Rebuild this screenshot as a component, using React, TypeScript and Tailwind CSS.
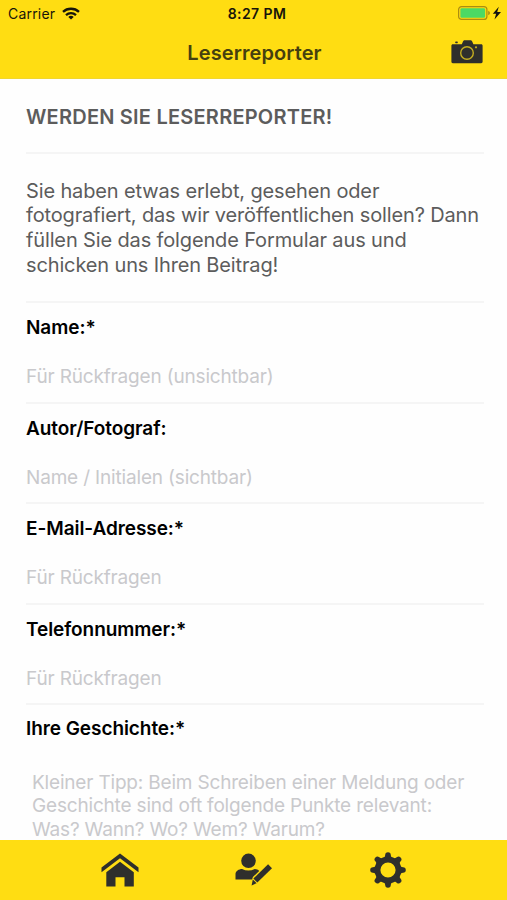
const fields = [
  { label: 'Name:*', hint: 'Für Rückfragen (unsichtbar)' },
  { label: 'Autor/Fotograf:', hint: 'Name / Initialen (sichtbar)' },
  { label: 'E-Mail-Adresse:*', hint: 'Für Rückfragen' },
  { label: 'Telefonnummer:*', hint: 'Für Rückfragen' },
];

function WifiIcon() {
  return (
    <svg width="18" height="13" viewBox="0 0 18 13" fill="none" stroke="#17150a" strokeWidth="2.3">
      <path d="M1 4.9C5.4.7 12.6.7 17 4.9" />
      <path d="M4 8.1c2.8-2.6 7.2-2.6 10 0" />
      <path d="M9 12.6 6.3 9.9c1.5-1.4 3.9-1.4 5.4 0z" fill="#17150a" stroke="none" />
    </svg>
  );
}

function BatteryIcon() {
  return (
    <svg width="45" height="15" viewBox="0 0 45 15">
      <rect x="0.6" y="0.6" width="28.3" height="12.8" rx="3" fill="none" stroke="#ac8d10" strokeWidth="1.2" />
      <rect x="2.4" y="2.3" width="24.7" height="9.4" rx="1.3" fill="#4cd964" />
      <path d="M30.4 4.8c1.8.7 1.8 3.7 0 4.4z" fill="#8c7618" />
      <path d="M40.8 .8 34.8 7.7h3.3l-1.6 5.8 6.5-7.4h-3.8z" fill="#111" />
    </svg>
  );
}

function CameraIcon() {
  return (
    <svg width="32" height="24" viewBox="0 0 32 24">
      <path
        d="M1.8 4.3h9L12 1.6C12.4.7 13 .3 13.8.3h5.6c.8 0 1.4.4 1.8 1.3l1.2 2.7h7.8c.8 0 1.4.6 1.4 1.4v16.1c0 .8-.6 1.4-1.4 1.4H1.8c-.8 0-1.4-.6-1.4-1.4V5.7c0-.8.6-1.4 1.4-1.4z"
        fill="#2f2f2c"
      />
      <rect x="4.2" y="1.6" width="2.6" height="1.6" rx="0.6" fill="#2f2f2c" />
      <circle cx="16" cy="13" r="6.3" fill="none" stroke="#c4ad20" strokeWidth="1.4" />
      <circle cx="25" cy="7.3" r="1.1" fill="#c4ad20" />
    </svg>
  );
}

function HomeIcon() {
  return (
    <svg width="38" height="34" viewBox="0 0 38 34" fill="#2f2f2c">
      <path d="M19 .5 37.5 14.6v4.6L19 5.3.5 19.2v-4.6z" />
      <path d="M19 8.7 32.8 19.2v14.3H23.5v-9.3h-9v9.3H5.3V19.2z" />
    </svg>
  );
}

function UserEditIcon() {
  return (
    <svg width="38" height="34" viewBox="0 0 38 34" fill="#2f2f2c">
      <circle cx="13.5" cy="7.8" r="7.3" />
      <path d="M.5 26.5v-5.2c0-3 3.3-5.2 6.6-5.2 4 2 8.5 2 12.7 0 1.7.2 3.3.7 4.4 1.8l-6.3 6.2-.8 2.4z" />
      <path d="m33.1 11.3 3.9 3.9-14.7 14.3-3.9-3.9z" />
      <path d="m17.8 26.4 3.8 3.8-5 2.2z" />
    </svg>
  );
}

const teeth = [0, 45, 90, 135, 180, 225, 270, 315];

function GearIcon() {
  return (
    <svg width="36" height="36" viewBox="-18 -18 36 36" fill="#2f2f2c">
      <circle r="10.5" fill="none" stroke="#2f2f2c" strokeWidth="5.8" />
      {teeth.map((angle) => (
        <path
          key={angle}
          transform={`rotate(${angle})`}
          d="M-5.5-11.5c1.9-.7 2.5-1.8 2.7-3.6.1-1.7.9-2.7 2.8-2.7s2.7 1 2.8 2.7c.2 1.8.8 2.9 2.7 3.6z"
        />
      ))}
    </svg>
  );
}

export default function App() {
  return (
    <div className="flex h-[900px] w-[507px] flex-col overflow-hidden bg-[#fefefe] font-['Inter','Liberation_Sans',sans-serif]">
      <header className="h-[79px] shrink-0 border-b border-[#f0d630] bg-[#ffdd12]">
        <div className="grid h-[27px] grid-cols-3 items-center pl-2 pr-[4px] text-[#17150a]">
          <div className="flex items-center gap-[7px] text-[14px] tracking-[0.2px]">
            <span>Carrier</span>
            <WifiIcon />
          </div>
          <div className="pl-[3px] text-center text-[14px] font-semibold tracking-[0.4px]">8:27 PM</div>
          <div className="flex justify-end">
            <BatteryIcon />
          </div>
        </div>
        <div className="grid h-[50px] grid-cols-[1fr_auto_1fr] items-center pr-6">
          <span />
          <h1 className="pl-[26px] pt-px text-[20px] font-semibold tracking-[0.1px] text-[#45400f]">Leserreporter</h1>
          <div className="flex justify-end">
            <CameraIcon />
          </div>
        </div>
      </header>

      <main className="min-h-0 flex-1 overflow-hidden pl-[26px] pr-[23px]">
        <h2 className="flex h-[75px] items-center border-b-2 border-[#f5f5f5] pt-[2px] text-[20px] font-semibold tracking-[0.22px] text-[#5c5c5c]">
          WERDEN SIE LESERREPORTER!
        </h2>
        <div className="h-[149px] whitespace-nowrap border-b-2 border-[#f5f5f5] pt-[24.5px] text-[20px] leading-[24.8px] tracking-[-0.14px] text-[#5c5c5c]">
          <p>Sie haben etwas erlebt, gesehen oder</p>
          <p>fotografiert, das wir veröffentlichen sollen? Dann</p>
          <p>füllen Sie das folgende Formular aus und</p>
          <p>schicken uns Ihren Beitrag!</p>
        </div>
        {fields.map((field) => (
          <div key={field.label} className="h-[100.5px] border-b-2 border-[#f5f5f5] pt-[13px]">
            <p className="text-[19px] font-semibold leading-[24px] tracking-[-0.07px] text-black">{field.label}</p>
            <p className="mt-[25px] text-[19px] leading-[24px] tracking-[-0.17px] text-[#c9c9cc]">{field.hint}</p>
          </div>
        ))}
        <div className="pt-[12px]">
          <p className="text-[19px] font-semibold leading-[24px] tracking-[-0.07px] text-black">Ihre Geschichte:*</p>
          <div className="mt-[30px] whitespace-nowrap pl-[6px] text-[19px] leading-[23.3px] tracking-[-0.18px] text-[#c9c9cc]">
            <p>Kleiner Tipp: Beim Schreiben einer Meldung oder</p>
            <p>Geschichte sind oft folgende Punkte relevant:</p>
            <p>Was? Wann? Wo? Wem? Warum?</p>
          </div>
        </div>
      </main>

      <nav className="flex h-[60px] shrink-0 items-center justify-between bg-[#ffdd12] pb-[1px] pl-[100.5px] pr-[101px]">
        <HomeIcon />
        <UserEditIcon />
        <GearIcon />
      </nav>
    </div>
  );
}
